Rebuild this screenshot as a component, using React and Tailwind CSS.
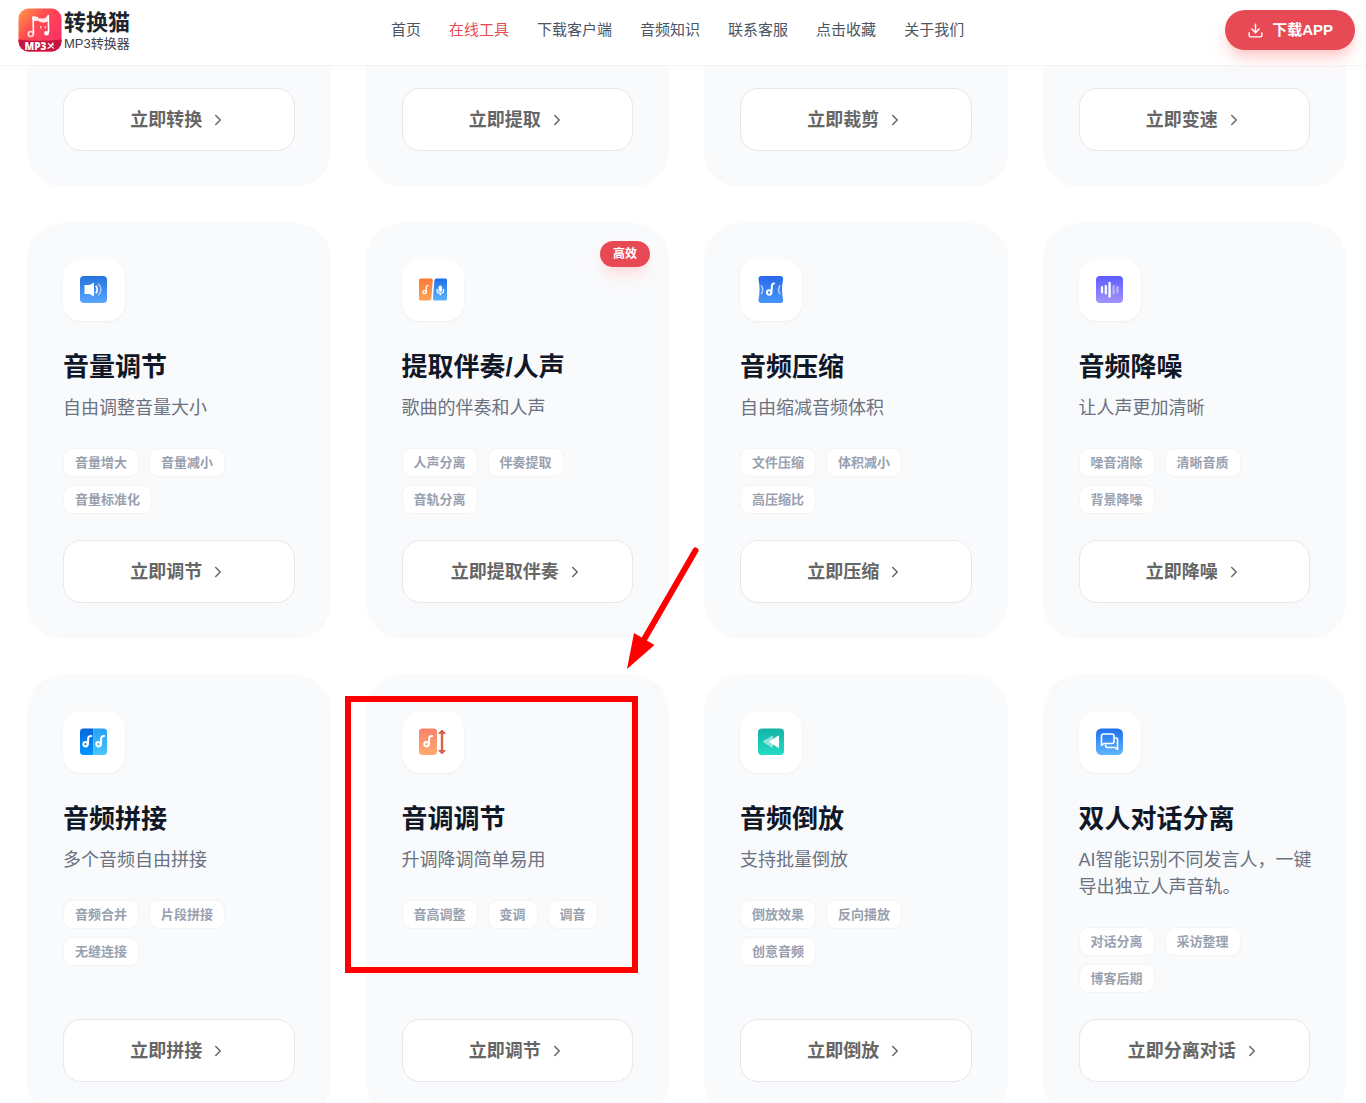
import React from 'react';
import { ChevronRight, Download } from 'lucide-react';

const NAV_ITEMS = ['首页', '在线工具', '下载客户端', '音频知识', '联系客服', '点击收藏', '关于我们'];

const Gradient = ({ id, from, to }) => (
    <linearGradient id={id} x1="0" y1="0" x2="0" y2="1">
        <stop offset="0" stopColor={from} />
        <stop offset="1" stopColor={to} />
    </linearGradient>
);

// Single music note, about 8 x 10 units with its origin at the top left
const Note = ({ x, y }) => (
    <g transform={`translate(${x} ${y}) scale(1.2)`} fill="none" stroke="#fff" strokeWidth="1.7" strokeLinecap="round">
        <circle cx="2.5" cy="7.7" r="1.8" />
        <path d="M4.4 7.6 L4.8 2.2 Q5 .8 7.2 .8" />
    </g>
);

const VolumeIcon = () => (
    <svg width="28" height="28" viewBox="0 0 28 28">
        <defs><Gradient id="volume" from="#2673dc" to="#59a6ff" /></defs>
        <rect x="0" y="0" width="27" height="27" rx="4" fill="url(#volume)" />
        <path d="M4.500 9 h5 L14 6.500 v14 L9.500 18 H4.500z" fill="#fff" />
        <path d="M15.800 9.800 q3 3.700 0 7.400" stroke="#fff" strokeWidth="1.7" fill="none" />
        <path d="M18 7.500 q6 6 0 12" stroke="#9fcbff" strokeWidth="1.5" fill="none" />
    </svg>
);

const VocalIcon = () => (
    <svg width="30" height="28" viewBox="0 0 30 28">
        <defs>
            <Gradient id="vocalLeft" from="#ff7733" to="#ffa355" />
            <Gradient id="vocalRight" from="#1f6fe8" to="#5cb2ff" />
        </defs>
        <path d="M2.500 2.500 H13 Q15 2.500 14.800 4.500 L13.300 22.500 Q13.100 24.500 11.300 24.500 H2.500 Q1 24.500 1 23 V4 Q1 2.500 2.500 2.500z" fill="url(#vocalLeft)" />
        <path d="M18.300 2.500 H27.500 Q29 2.500 29 4 V23 Q29 24.500 27.500 24.500 H16.500 Q14.700 24.500 14.900 22.500 L16.400 4.500 Q16.600 2.500 18.300 2.500z" fill="url(#vocalRight)" />
        <g fill="none" stroke="#fff" strokeWidth="1.300" strokeLinecap="round">
            <circle cx="6.500" cy="16.300" r="1.600" />
            <path d="M8.200 16.300 V11 Q8.300 9.700 10 9.700" />
            <path d="M19 13.500 q0 4 3.300 4 t3.300 -4 M22.300 17.500 v1.500" />
        </g>
        <rect x="20.600" y="9.500" width="3.400" height="6.500" rx="1.700" fill="#fff" />
    </svg>
);

const CompressIcon = () => (
    <svg width="28" height="28" viewBox="0 0 28 28">
        <defs><Gradient id="compress" from="#2b68ea" to="#4596fa" /></defs>
        <path d="M4.500 0 H23 Q26.500 0 26.100 3.500 Q24 13.500 26.100 23.500 Q26.500 27 23 27 H4.500 Q1.200 27 1.500 23.500 Q3.600 13.500 1.500 3.500 Q1.200 0 4.500 0z" fill="url(#compress)" />
        <path d="M4.500 10 q2.400 3.500 0 7.500 M22.800 10 q-2.400 3.500 0 7.500" stroke="#a8cbff" strokeWidth="1.700" fill="none" strokeLinecap="round" />
        <g transform="translate(9 6.500) scale(1.3)" fill="none" stroke="#fff" strokeWidth="1.500" strokeLinecap="round">
            <circle cx="2.400" cy="7.700" r="1.700" />
            <path d="M4.200 7.600 L4.600 2.200 Q4.800 .8 6.200 .8" />
        </g>
    </svg>
);

const DenoiseIcon = () => (
    <svg width="28" height="28" viewBox="0 0 28 28">
        <defs><Gradient id="denoise" from="#5c5cff" to="#a394ff" /></defs>
        <rect x="0" y="0" width="27" height="27" rx="4" fill="url(#denoise)" />
        <g strokeLinecap="round" strokeWidth="2.200" stroke="#fff">
            <path d="M6 11 v5.500 M9.800 10 v7.500" />
            <path d="M13.600 7 v13.500" strokeWidth="2.400" />
            <path d="M17.600 10 v7.500 M21.400 11 v5.500" opacity=".45" />
        </g>
    </svg>
);

const JoinIcon = () => (
    <svg width="28" height="28" viewBox="0 0 28 28">
        <defs>
            <Gradient id="joinLeft" from="#0266df" to="#0396ff" />
            <Gradient id="joinRight" from="#26a1f7" to="#4cc4f9" />
        </defs>
        <path d="M3.500 .5 H13.500 V27 H3.500 Q0 27 0 23.500 V4 Q0 .5 3.500 .5z" fill="url(#joinLeft)" />
        <path d="M13.500 .5 H23.500 Q27 .5 27 4 V23.500 Q27 27 23.500 27 H13.500z" fill="url(#joinRight)" />
        <Note x={2.5} y={7} />
        <Note x={15.5} y={7} />
    </svg>
);

const PitchIcon = () => (
    <svg width="28" height="28" viewBox="0 0 28 28">
        <defs><Gradient id="pitch" from="#f7826a" to="#ffab70" /></defs>
        <rect x="0" y="0.500" width="18" height="26.500" rx="3.500" fill="url(#pitch)" />
        <Note x={4.5} y={7} />
        <path d="M23 4 V24" stroke="#d9604a" strokeWidth="2.400" />
        <path d="M23 2 L26.300 5.300 H19.700z M23 25.800 L26.300 22.500 H19.700z" fill="#d9604a" stroke="#d9604a" strokeLinejoin="round" />
    </svg>
);

const ReverseIcon = () => (
    <svg width="28" height="28" viewBox="0 0 28 28">
        <defs><Gradient id="reverse" from="#14b2a6" to="#22dcc5" /></defs>
        <rect x="1" y="0.500" width="26" height="26.500" rx="4" fill="url(#reverse)" />
        <path d="M6 13.700 L15.500 8 V19.500z" fill="#8fe3da" stroke="#8fe3da" strokeLinejoin="round" />
        <path d="M12.500 13.700 L21.500 8 V19.500z" fill="#fff" stroke="#fff" strokeLinejoin="round" />
    </svg>
);

const DialogueIcon = () => (
    <svg width="28" height="28" viewBox="0 0 28 28">
        <defs><Gradient id="dialogue" from="#1f70ea" to="#5fb6ff" /></defs>
        <rect x="0" y="0.500" width="27" height="26.500" rx="5.500" fill="url(#dialogue)" />
        <g fill="none" stroke="#fff" strokeWidth="1.600" strokeLinejoin="round" strokeLinecap="round">
            <path d="M7.500 6 H16 Q18 6 18 8 V13.500 Q18 15.500 16 15.500 H8 L5.500 17.500 V8 Q5.500 6 7.500 6z" />
            <path d="M18.500 10 H20 Q21.500 10 21.500 12 V21.500 L19 19.500 H11.500 Q9.500 19.500 9.500 17" />
        </g>
    </svg>
);

const Logo = () => (
    <a href="#" className="flex items-center gap-[2px]">
        <svg width="44" height="44" viewBox="0 0 44 44">
            <defs>
                <linearGradient id="logo" x1="0" y1="0" x2="1" y2="0.800">
                    <stop offset="0" stopColor="#ffa048" />
                    <stop offset="0.400" stopColor="#ff4d50" />
                    <stop offset="1" stopColor="#fb2b6b" />
                </linearGradient>
                <clipPath id="logoClip"><rect x="0.500" y="0.500" width="43" height="43" rx="10" /></clipPath>
            </defs>
            <g clipPath="url(#logoClip)">
                <rect width="44" height="44" fill="url(#logo)" />
                <path d="M0 31.500 Q22 34 44 31.500 V44 H0z" fill="#c8153e" />
            </g>
            <path d="M15 9.500 L19 9 L21.500 10.500 H26.500 L30.300 7 V13 Q25 16.500 19.500 12.500 L15 13.500z" fill="#ffe9ea" />
            <path d="M15.500 26 L15 9 L19 9.500 M30.300 7.500 L30.600 24" stroke="#fff" strokeWidth="1.600" fill="none" strokeLinecap="round" strokeLinejoin="round" />
            <circle cx="12.800" cy="26" r="2.500" fill="none" stroke="#ffe3e0" strokeWidth="1.500" />
            <ellipse cx="28.500" cy="25.300" rx="2.400" ry="2.200" fill="#fff" />
            <path d="M22.800 18 v2.500 M27.300 18 v2.500" stroke="#ffd5d8" strokeWidth="1.300" />
            <text x="6.500" y="41.500" fontSize="10" fontWeight="900" fill="#fff" fontFamily="Open Sans, sans-serif">MP3</text>
            <path d="M30 35 q2 3 6 5.500 M35 34.500 q-1 4 -5.500 6 M32 37 h4" stroke="#fff" strokeWidth="1.200" fill="none" />
        </svg>
        <span className="flex flex-col pt-[2px]">
            <span className="text-[22px] leading-[26px] font-bold text-[#20242d]">转换猫</span>
            <span className="text-[13px] leading-[16px] text-[#3d424c]">MP3转换器</span>
        </span>
    </a>
);

// First row sits half under the header, only the buttons are visible
const TOP_ACTIONS = ['立即转换', '立即提取', '立即裁剪', '立即变速'];

const TOOLS = [
    { title: '音量调节', desc: '自由调整音量大小', tags: ['音量增大', '音量减小', '音量标准化'], action: '立即调节', icon: VolumeIcon },
    { title: '提取伴奏/人声', desc: '歌曲的伴奏和人声', tags: ['人声分离', '伴奏提取', '音轨分离'], action: '立即提取伴奏', icon: VocalIcon, badge: '高效' },
    { title: '音频压缩', desc: '自由缩减音频体积', tags: ['文件压缩', '体积减小', '高压缩比'], action: '立即压缩', icon: CompressIcon },
    { title: '音频降噪', desc: '让人声更加清晰', tags: ['噪音消除', '清晰音质', '背景降噪'], action: '立即降噪', icon: DenoiseIcon },
    { title: '音频拼接', desc: '多个音频自由拼接', tags: ['音频合并', '片段拼接', '无缝连接'], action: '立即拼接', icon: JoinIcon },
    { title: '音调调节', desc: '升调降调简单易用', tags: ['音高调整', '变调', '调音'], action: '立即调节', icon: PitchIcon, marked: true },
    { title: '音频倒放', desc: '支持批量倒放', tags: ['倒放效果', '反向播放', '创意音频'], action: '立即倒放', icon: ReverseIcon },
    { title: '双人对话分离', desc: 'AI智能识别不同发言人，一键导出独立人声音轨。', tags: ['对话分离', '采访整理', '博客后期'], action: '立即分离对话', icon: DialogueIcon },
];

const ActionButton = ({ children }) => (
    <button className="w-full h-[63px] flex items-center justify-center gap-[7px] bg-white border border-gray-200 rounded-[18px] text-[18px] font-bold text-[#666]">
        <span className="pt-[2px]">{children}</span>
        <ChevronRight size={18} />
    </button>
);

// Red box and arrow that point at the highlighted tool
const Marker = () => (
    <>
        <div className="absolute -left-[21px] top-[21px] w-[293px] h-[277px] border-[6px] border-[#ff0000] pointer-events-none"></div>
        <svg className="absolute left-[254px] -top-[130px] pointer-events-none" width="84" height="128" viewBox="0 0 84 128">
            <path d="M75.500 5.500 L22 98" stroke="#f00" strokeWidth="6" strokeLinecap="round" />
            <path d="M14 88 L34.500 100 L7 124z" fill="#f00" />
        </svg>
    </>
);

const ToolCard = ({ tool }) => {
    const Icon = tool.icon;
    return (
        <article className="relative flex flex-col p-9 bg-[#f9fafc] rounded-[36px]">
            {tool.badge && (
                <span className="absolute top-[18px] right-[19px] h-[26px] px-[13px] flex items-center rounded-full bg-[#e84a55] text-white text-[12px] font-bold shadow-lg shadow-red-200/60">
                    {tool.badge}
                </span>
            )}
            <div className="w-[62px] h-[62px] flex items-center justify-center bg-white rounded-[18px] shadow-[0_1px_3px_rgba(0,0,0,0.05)]">
                <Icon />
            </div>
            <h3 className="mt-[29px] text-[26px] leading-[35px] font-bold text-gray-900 whitespace-nowrap">{tool.title}</h3>
            <p className="mt-[10px] -mr-2 text-[18px] leading-[27px] text-gray-500">{tool.desc}</p>
            <ul className="my-[26px] flex flex-wrap gap-x-[10px] gap-y-2">
                {tool.tags.map((tag) => (
                    <li key={tag} className="h-[29px] px-[11px] flex items-center bg-white border border-gray-100 rounded-[9px] text-[13px] font-bold text-gray-400">
                        {tag}
                    </li>
                ))}
            </ul>
            <div className="mt-auto">
                <ActionButton>{tool.action}</ActionButton>
            </div>
            {tool.marked && <Marker />}
        </article>
    );
};

const App = () => {
    return (
        <div lang="zh-CN" className="min-h-screen bg-white font-['Liberation_Sans','Noto_Sans_CJK_SC',sans-serif]">
            <header className="sticky top-0 z-50 h-[66px] pl-[18px] pr-[11px] pb-[5px] flex items-center justify-between bg-white border-b border-gray-100">
                <Logo />
                <nav className="flex items-center gap-7 pt-px text-[15px]">
                    {NAV_ITEMS.map((item) => (
                        <a key={item} href="#" className={item === '在线工具' ? 'text-[#e84a55]' : 'text-gray-600'}>
                            {item}
                        </a>
                    ))}
                </nav>
                <button className="h-10 px-[22px] flex items-center gap-2 rounded-full bg-[#e84a55] text-white text-[15px] font-bold shadow-lg shadow-red-200">
                    <Download size={17} />
                    下载APP
                </button>
            </header>

            <main className="pl-[27px] pr-5 pb-9">
                <div className="grid grid-cols-4 gap-x-[35px] gap-y-9">
                    {TOP_ACTIONS.map((action) => (
                        <article key={action} className="px-9 pt-[22px] pb-9 bg-[#f9fafc] rounded-b-[36px]">
                            <ActionButton>{action}</ActionButton>
                        </article>
                    ))}
                    {TOOLS.map((tool) => (
                        <ToolCard key={tool.title} tool={tool} />
                    ))}
                </div>
            </main>
        </div>
    );
};

export default App;
